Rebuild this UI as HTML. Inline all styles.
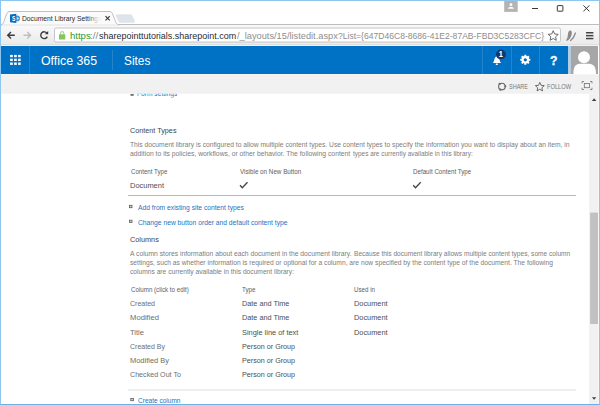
<!DOCTYPE html>
<html lang="en"><head><meta charset="utf-8"><title>Document Library Settings</title>
<style>
html,body{margin:0;padding:0;}
body{width:600px;height:405px;position:relative;overflow:hidden;background:#fff;font-family:"Liberation Sans",sans-serif;}
.a{position:absolute;}
.t{position:absolute;white-space:nowrap;line-height:1em;transform-origin:0 50%;font-family:"Liberation Sans",sans-serif;}
#texts{position:absolute;left:0;top:0;width:600px;height:403.5px;overflow:hidden;}
svg{position:absolute;overflow:visible;}

</style></head>
<body>
<!-- window frame -->
<div class="a" style="left:0;top:0;width:600px;height:405px;background:#fff;"></div>
<!-- toolbar -->
<div class="a" style="left:1px;top:24px;width:598px;height:22px;background:linear-gradient(#fff 0,#fff 0.300px,#bdbdbd 0.500px,#bdbdbd 1.300px,#f9f9f9 1.500px,#ebebeb 19.500px,#d9d9d9 20.300px,#f2f2f2 21.100px,#f2f2f2 100%);"></div>
<!-- tab -->
<svg style="left:0;top:0" width="600" height="46" viewBox="0 0 600 46">
  <path d="M1.500 25 C4.300 24.500 5.600 12 9 11.500 L110.500 11.500 C113.500 12 115 24.500 118.500 25 Z" fill="#fafafa" stroke="#b0b0b0" stroke-width="0.800"/>
  <rect x="2.200" y="24.400" width="115.600" height="1.200" fill="#fafafa"/>
  <path d="M116.300 14.700 L130.500 14.700 C131.500 14.700 132 15.300 132.400 16.300 L134.400 21.200 C134.700 22.100 134.400 22.600 133.500 22.600 L120.500 22.600 C119.500 22.600 119 22 118.600 21 L116 15.600 C115.700 15 115.800 14.700 116.300 14.700 Z" fill="#dfe4eb" stroke="#d2d7df" stroke-width="0.400"/>
  <!-- favicon -->
  <circle cx="17.200" cy="18.400" r="2.800" fill="#3a97e0"/>
  <path d="M16.600 16.700 L19.300 18.400 L16.600 20.100 Z" fill="#cfe6f8"/>
  <path d="M10 14.600 L16.300 13.800 L16.300 23 L10 22.300 Z" fill="#0a6ac0"/>
  <!-- tab close -->
  <path d="M105.500 16.200 L109.700 20.400 M109.700 16.200 L105.500 20.400" stroke="#3a3a3a" stroke-width="1.200" fill="none"/>
  <!-- user badge -->
  <rect x="504.200" y="0.800" width="13.500" height="11.100" fill="#b4b4b4"/>
  <circle cx="511" cy="4.700" r="1.400" fill="#fff"/>
  <path d="M508.100 8.700 C508.100 6.300 513.900 6.300 513.900 8.700 Z" fill="#fff"/>
  <!-- window controls -->
  <path d="M532 8.500 H538" stroke="#222" stroke-width="0.9"/>
  <rect x="557.300" y="5.600" width="5.600" height="5.600" fill="none" stroke="#222" stroke-width="0.9" rx="0.500"/>
  <path d="M583.400 5.400 L589.400 11.400 M589.400 5.400 L583.400 11.400" stroke="#222" stroke-width="0.9"/>
  <!-- nav arrows -->
  <path d="M14.800 35.300 H8 M11 32 L7.700 35.300 L11 38.600" stroke="#3c3c3c" stroke-width="1.400" fill="none"/>
  <path d="M23.500 35.300 H30.300 M27.300 32 L30.600 35.300 L27.300 38.600" stroke="#bdbdbd" stroke-width="1.400" fill="none"/>
  <path d="M47 33.300 A3.400 3.400 0 1 0 47.300 36.600" stroke="#3c3c3c" stroke-width="1.400" fill="none"/>
  <path d="M44.800 34.300 L48.200 34.300 L48.200 30.900 Z" fill="#3c3c3c"/>
  <!-- url box -->
  <rect x="54.500" y="28" width="506" height="14" rx="1.500" fill="#fff" stroke="#b9b9b9" stroke-width="0.8"/>
  <!-- lock -->
  <rect x="59" y="34.300" width="6.300" height="5.300" rx="0.600" fill="#84c65c"/>
  <path d="M60.500 34.500 V33.300 A1.650 1.650 0 0 1 63.800 33.300 V34.500" stroke="#a9d68e" stroke-width="1.100" fill="none"/>
  <!-- star -->
  <path d="M553.20 30.70 L554.67 33.98 L558.24 34.36 L555.58 36.77 L556.32 40.29 L553.20 38.50 L550.08 40.29 L550.82 36.77 L548.16 34.36 L551.73 33.98 Z" fill="none" stroke="#5a5a5a" stroke-width="0.900" stroke-linejoin="round"/>
  <!-- extension -->
  <path transform="translate(-1.200 0.200)" d="M571.600 30.400 C573.800 30.900 573.200 35 571.700 37.400 C570.500 39.400 568.600 41.100 567.600 40.500 C566.900 39.900 568.300 38.700 568.800 36.700 C569.300 34.400 569.100 30 571.600 30.400 Z" fill="#8a8a8a"/>
  <path d="M575.400 33 C574.600 35.800 572.800 38.900 570.600 40.600" fill="none" stroke="#8a8a8a" stroke-width="1.300" stroke-linecap="round"/>
  <!-- hamburger -->
  <rect x="586" y="32" width="7.400" height="1.500" fill="#444"/>
  <rect x="586" y="34.900" width="7.400" height="1.500" fill="#444"/>
  <rect x="586" y="37.800" width="7.400" height="1.500" fill="#444"/>
</svg>
<!-- office header -->
<div class="a" style="left:1px;top:46px;width:567px;height:28px;background:#0072c6;"></div>
<div class="a" style="left:567.500px;top:46px;width:3px;height:28px;background:#b5cde0;"></div>
<div class="a" style="left:570.500px;top:46px;width:27.500px;height:28px;background:#a6a6a6;overflow:hidden;"></div>
<svg style="left:0;top:46px" width="600" height="28" viewBox="0 46 600 28">
  <!-- dividers -->
  <rect x="29.200" y="46" width="0.600" height="28" fill="#3d93d4"/>
  <rect x="112" y="50" width="0.600" height="20" fill="#3d93d4"/>
  <rect x="482.300" y="46" width="0.600" height="28" fill="#3d93d4"/>
  <rect x="511.200" y="46" width="0.600" height="28" fill="#3d93d4"/>
  <rect x="539.400" y="46" width="0.600" height="28" fill="#3d93d4"/>
  <!-- waffle -->
  <g fill="#fff"><rect x="10.1" y="54.9" width="2.7" height="2.3"/><rect x="14.1" y="54.9" width="2.7" height="2.3"/><rect x="18.1" y="54.9" width="2.6" height="2.3"/><rect x="10.1" y="58.7" width="2.7" height="2.3"/><rect x="14.1" y="58.7" width="2.7" height="2.3"/><rect x="18.1" y="58.7" width="2.6" height="2.3"/><rect x="10.1" y="62.5" width="2.7" height="2.4"/><rect x="14.1" y="62.5" width="2.7" height="2.4"/><rect x="18.1" y="62.5" width="2.6" height="2.4"/></g>
  <!-- bell -->
  <path d="M492.700 62.900 C494.600 61.900 493.800 57.300 496.900 56.200 C500 57.300 499.400 61.900 501.300 62.900 Z" fill="#fff"/>
  <rect x="495.700" y="63.600" width="2.200" height="1.300" rx="0.600" fill="#fff"/>
  <rect x="496.300" y="55.500" width="1" height="1.200" fill="#fff"/>
  <circle cx="500.900" cy="54.400" r="4.950" fill="#10386a"/>
  <!-- gear -->
  <g stroke="#fff" stroke-width="2">
    <path d="M525.300 54.800 V64.800 M520.300 59.800 H530.300 M521.750 56.250 L528.850 63.350 M528.850 56.250 L521.750 63.350"/>
  </g>
  <circle cx="525.300" cy="59.800" r="3.800" fill="#fff"/>
  <circle cx="525.300" cy="59.800" r="1.650" fill="#0668b8"/>
  <!-- avatar -->
  <circle cx="584" cy="57.300" r="6" fill="#fff"/>
  <path d="M573.400 74 C573.400 68 574.500 64 580 63.700 L589 63.700 C594.500 64 596 68 596 74 Z" fill="#fff"/>
</svg>
<!-- grey band -->
<svg style="left:0;top:74px" width="600" height="20" viewBox="0 74 600 20"><rect x="1" y="74" width="598" height="19.750" fill="#f1f1f1"/><rect x="1" y="74" width="598" height="1" fill="#f8f4f1"/></svg>
<svg style="left:0;top:74px" width="600" height="20" viewBox="0 74 600 20">
  <!-- share icon -->
  <circle cx="501.900" cy="86.600" r="3.300" fill="none" stroke="#666" stroke-width="1.100"/>
  <circle cx="499.700" cy="83.900" r="1.100" fill="#6a6a6a"/>
  <circle cx="505.300" cy="86.300" r="1.100" fill="#6a6a6a"/>
  <circle cx="500.300" cy="89.700" r="1.100" fill="#6a6a6a"/>
  <!-- star -->
  <path d="M539.80 82.40 L541.09 85.32 L544.27 85.65 L541.89 87.78 L542.56 90.90 L539.80 89.30 L537.04 90.90 L537.71 87.78 L535.33 85.65 L538.51 85.32 Z" fill="none" stroke="#5e5e5e" stroke-width="0.900" stroke-linejoin="round"/>
  <!-- focus icon -->
  <rect x="584.300" y="83.400" width="5.300" height="4.300" fill="none" stroke="#707070" stroke-width="0.800"/>
  <path d="M582 83.300 V81.500 H584 M590 81.500 H592 V83.300 M592 87.700 V89.500 H590 M584 89.500 H582 V87.700" fill="none" stroke="#707070" stroke-width="0.800"/>
</svg>
<!-- scrollbar -->
<svg style="left:0;top:0" width="600" height="405" viewBox="0 0 600 405"><rect x="589.100" y="93.750" width="9.500" height="311" fill="#f1f1f1"/><rect x="590.100" y="212.600" width="7.900" height="111.400" fill="#c1c1c1"/></svg>

<svg style="left:0;top:0" width="600" height="405" viewBox="0 0 600 405">
  <path d="M591.900 100.900 L594.100 98.300 L596.300 100.900 Z" fill="#404040"/>
  <path d="M591.900 397.200 L594.100 399.800 L596.300 397.200 Z" fill="#404040"/>
  <!-- table lines -->
  <rect x="128" y="195" width="448" height="0.700" fill="#9a9a9a"/>
  <rect x="128" y="389.400" width="448" height="1.100" fill="#e2e2e2"/>
  <!-- bullets -->
  <rect x="130.500" y="94" width="3.200" height="1.800" fill="#6e6e6e"/>
  <g fill="#d4d4d4" stroke="#5c5c5c" stroke-width="0.800">
    <rect x="129.500" y="205.300" width="2.500" height="2.400"/>
    <rect x="129.500" y="220.200" width="2.500" height="2.400"/>
    <rect x="130.800" y="398.500" width="2.600" height="2.200"/>
  </g>
  <!-- checkmarks -->
  <path d="M240 185.300 L242.300 187.800 L247.500 182.300" fill="none" stroke="#444" stroke-width="1.300"/>
  <path d="M413.200 185.300 L415.500 187.800 L420.700 182.300" fill="none" stroke="#444" stroke-width="1.300"/>
</svg>
<!-- window border -->
<div class="a" style="left:0;top:0;width:600px;height:405px;box-sizing:border-box;border:1px solid #8cc6f1;border-bottom:1.300px solid #6cb0e6;border-right-width:1.400px;pointer-events:none;z-index:10;"></div>

<div id="texts">
<span class="t" id="t0" style="left:21.7px;top:16.00px;font-size:6.7px;color:#2a2a2a;transform:scaleX(1.0062);">Document Library Settings</span>
<span class="t" id="t1" style="left:69.5px;top:32.00px;font-size:8.8px;color:#2a9a2a;transform:scaleX(1.0850);">https</span>
<span class="t" id="t2" style="left:90.4px;top:32.00px;font-size:8.8px;color:#8a8a8a;transform:scaleX(1.1438);">://</span>
<span class="t" id="t3" style="left:99.0px;top:32.00px;font-size:8.8px;color:#2b2b2b;transform:scaleX(1.0202);">sharepointtutorials.sharepoint.com</span>
<span class="t" id="t4" style="left:236.7px;top:32.00px;font-size:8.8px;color:#8e8e8e;transform:scaleX(1.0517);">/_layouts/15/listedit.aspx</span>
<span class="t" id="t5" style="left:337.7px;top:32.00px;font-size:8.8px;color:#8e8e8e;transform:scaleX(0.9745);">?List={647D46C8-8686-41E2-87AB-FBD3C5283CFC}</span>
<span class="t" id="t6" style="left:11.5px;top:16.01px;font-size:6.8px;color:#fff;transform:scaleX(0.7478);font-weight:bold;">S</span>
<span class="t" id="t7" style="left:499.2px;top:51.30px;font-size:8.2px;color:#fff;transform:scaleX(0.8110);font-weight:bold;-webkit-text-stroke:0.2px #fff;">1</span>
<span class="t" id="t8" style="left:550.2px;top:54.81px;font-size:12.8px;color:#fff;transform:scaleX(0.9453);font-weight:bold;-webkit-text-stroke:0.3px #fff;">?</span>
<span class="t" id="t9" style="left:40.8px;top:54.61px;font-size:12.4px;color:#fff;transform:scaleX(0.9971);">Office 365</span>
<span class="t" id="t10" style="left:123.9px;top:54.61px;font-size:12.4px;color:#fff;transform:scaleX(0.9547);">Sites</span>
<span class="t" id="t11" style="left:509.0px;top:83.01px;font-size:7.0px;color:#777;transform:scaleX(0.7876);">SHARE</span>
<span class="t" id="t12" style="left:546.8px;top:83.01px;font-size:7.0px;color:#777;transform:scaleX(0.8118);">FOLLOW</span>
<span class="t" id="t13" style="left:137px;top:91.01px;font-size:6.6px;color:#1a73c2;transform:scaleX(1.0087);clip-path:inset(2.74px 0 0 0);">Form settings</span>
<span class="t" id="t14" style="left:130px;top:127.02px;font-size:8.1px;color:#444;transform:scaleX(0.8934);">Content Types</span>
<span class="t" id="t15" style="left:130px;top:142.00px;font-size:6.5px;color:#7c7c7c;transform:scaleX(1.0317);">This document library is configured to allow multiple content types. Use content types to specify the information you want to display about an item, in</span>
<span class="t" id="t16" style="left:130px;top:151.00px;font-size:6.5px;color:#7c7c7c;transform:scaleX(1.0424);">addition to its policies, workflows, or other behavior. The following content</span>
<span class="t" id="t17" style="left:352.8px;top:151.00px;font-size:6.5px;color:#7c7c7c;transform:scaleX(0.9890);">types are currently available in this library:</span>
<span class="t" id="t18" style="left:131px;top:169.01px;font-size:6.3px;color:#5e5e5e;transform:scaleX(0.9721);">Content Type</span>
<span class="t" id="t19" style="left:239.5px;top:169.01px;font-size:6.3px;color:#5e5e5e;transform:scaleX(0.9967);">Visible on New Button</span>
<span class="t" id="t20" style="left:413px;top:169.01px;font-size:6.3px;color:#5e5e5e;transform:scaleX(0.9857);">Default Content Type</span>
<span class="t" id="t21" style="left:130px;top:183.01px;font-size:7.1px;color:#4e4e4e;transform:scaleX(1.0512);">Document</span>
<span class="t" id="t22" style="left:138px;top:205.00px;font-size:6.7px;color:#1a73c2;transform:scaleX(1.0021);">Add from existing site content types</span>
<span class="t" id="t23" style="left:138px;top:220.00px;font-size:6.7px;color:#1a73c2;transform:scaleX(1.0053);">Change new button order and default content type</span>
<span class="t" id="t24" style="left:130px;top:236.02px;font-size:8.1px;color:#444;transform:scaleX(0.9018);">Columns</span>
<span class="t" id="t25" style="left:130px;top:251.00px;font-size:6.5px;color:#7c7c7c;transform:scaleX(1.0383);">A column stores information about each document in the document library.</span>
<span class="t" id="t26" style="left:354.3px;top:251.00px;font-size:6.5px;color:#7c7c7c;transform:scaleX(1.0108);">Because this document library allows multiple content types, some column</span>
<span class="t" id="t27" style="left:130px;top:260.00px;font-size:6.5px;color:#7c7c7c;transform:scaleX(1.0308);">settings, such as whether information is required or optional for a column, are now specified by the content type of the document. The following</span>
<span class="t" id="t28" style="left:130px;top:269.00px;font-size:6.5px;color:#7c7c7c;transform:scaleX(1.0247);">columns are currently available in this document library:</span>
<span class="t" id="t29" style="left:131px;top:287.01px;font-size:6.3px;color:#5e5e5e;transform:scaleX(0.9830);">Column (click to edit)</span>
<span class="t" id="t30" style="left:241.8px;top:287.01px;font-size:6.3px;color:#5e5e5e;transform:scaleX(0.9886);">Type</span>
<span class="t" id="t31" style="left:354px;top:287.01px;font-size:6.3px;color:#5e5e5e;transform:scaleX(0.9832);">Used in</span>
<span class="t" id="t32" style="left:130px;top:301.01px;font-size:7.1px;color:#6e6e6e;transform:scaleX(0.9901);">Created</span>
<span class="t" id="t33" style="left:241.7px;top:301.01px;font-size:7.1px;color:#4e4e4e;transform:scaleX(1.0273);">Date and Time</span>
<span class="t" id="t34" style="left:353.7px;top:301.01px;font-size:7.1px;color:#4e4e4e;transform:scaleX(1.0388);">Document</span>
<span class="t" id="t35" style="left:130px;top:315.01px;font-size:7.1px;color:#6e6e6e;transform:scaleX(1.0810);">Modified</span>
<span class="t" id="t36" style="left:241.7px;top:315.01px;font-size:7.1px;color:#4e4e4e;transform:scaleX(1.0273);">Date and Time</span>
<span class="t" id="t37" style="left:353.7px;top:315.01px;font-size:7.1px;color:#4e4e4e;transform:scaleX(1.0388);">Document</span>
<span class="t" id="t38" style="left:130px;top:330.01px;font-size:7.1px;color:#6e6e6e;transform:scaleX(1.0654);">Title</span>
<span class="t" id="t39" style="left:241.7px;top:330.01px;font-size:7.1px;color:#4e4e4e;transform:scaleX(1.0420);">Single line of text</span>
<span class="t" id="t40" style="left:353.7px;top:330.01px;font-size:7.1px;color:#4e4e4e;transform:scaleX(1.0388);">Document</span>
<span class="t" id="t41" style="left:130px;top:344.01px;font-size:7.1px;color:#6e6e6e;transform:scaleX(0.9859);">Created By</span>
<span class="t" id="t42" style="left:241.7px;top:344.01px;font-size:7.1px;color:#4e4e4e;transform:scaleX(1.0123);">Person or Group</span>
<span class="t" id="t43" style="left:130px;top:358.01px;font-size:7.1px;color:#6e6e6e;transform:scaleX(1.0523);">Modified By</span>
<span class="t" id="t44" style="left:241.7px;top:358.01px;font-size:7.1px;color:#4e4e4e;transform:scaleX(1.0123);">Person or Group</span>
<span class="t" id="t45" style="left:130px;top:372.01px;font-size:7.1px;color:#6e6e6e;transform:scaleX(1.0049);">Checked Out To</span>
<span class="t" id="t46" style="left:241.7px;top:372.01px;font-size:7.1px;color:#4e4e4e;transform:scaleX(1.0123);">Person or Group</span>
<span class="t" id="t47" style="left:137.5px;top:398.00px;font-size:6.7px;color:#1a73c2;transform:scaleX(0.9770);">Create column</span>
</div>
<div class="a" style="left:88px;top:13px;width:14px;height:11px;background:linear-gradient(to right,rgba(250,250,250,0),rgba(250,250,250,0.92) 75%,rgba(250,250,250,0.95));"></div>
</body></html>
